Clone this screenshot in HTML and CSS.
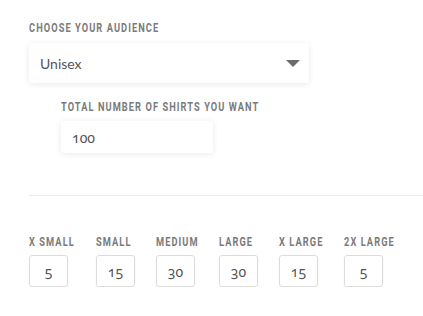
FILE: index.html
```html
<!DOCTYPE html>
<html>
<head>
<meta charset="utf-8">
<link rel="stylesheet" href="styles.css">
</head>
<body>
<div class="page">
  <div class="audience">
    <div class="label"><span>Choose your audience</span></div>
    <div class="select">
      <span class="select-value">Unisex</span>
      <svg class="caret" width="14" height="7" viewBox="0 0 14 7"><path d="M0 0H14L7 7Z" fill="#6b6b6b"/></svg>
    </div>
  </div>
  <div class="total">
    <div class="label"><span>Total number of shirts you want</span></div>
    <div class="text-input num">100</div>
  </div>
  <div class="divider"></div>
  <div class="sizes">
    <div class="size"><div class="label"><span>X Small</span></div><div class="size-box num">5</div></div>
    <div class="size"><div class="label"><span>Small</span></div><div class="size-box num">15</div></div>
    <div class="size"><div class="label"><span>Medium</span></div><div class="size-box num">30</div></div>
    <div class="size"><div class="label"><span>Large</span></div><div class="size-box num">30</div></div>
    <div class="size"><div class="label"><span>X Large</span></div><div class="size-box num">15</div></div>
    <div class="size"><div class="label"><span>2X Large</span></div><div class="size-box num">5</div></div>
  </div>
</div>
</body>
</html>
```
FILE: styles.css
```css
html, body {
  margin: 0;
  padding: 0;
  background: #fff;
}
.page {
  padding: 21px 0 0 29px;
  font-family: Lato, "Open Sans", sans-serif;
  color: #555;
}
.label {
  font-family: Roboto, "Liberation Sans", sans-serif;
  font-weight: bold;
  font-size: 12.5px;
  line-height: 14px;
  letter-spacing: 1.45px;
  text-transform: uppercase;
  color: #7b7b7b;
  white-space: nowrap;
}
.label span {
  display: inline-block;
  transform: scaleX(0.74);
  transform-origin: 0 50%;
}
.audience .label {
  margin-bottom: 8px;
}
.select {
  width: 280px;
  height: 40px;
  box-sizing: border-box;
  padding: 0 9px 0 11px;
  display: flex;
  align-items: center;
  justify-content: space-between;
  background: #fff;
  border-radius: 3px;
  box-shadow: 0 1px 6px rgba(0, 0, 0, 0.09);
}
.select-value {
  font-size: 14px;
  color: #555;
}
.num {
  font-family: "Noto Sans", "Open Sans", sans-serif;
  font-variant-numeric: oldstyle-nums;
  font-feature-settings: "onum" 1;
  color: #555;
}
.total {
  margin: 17px 0 0 32px;
}
.total .label {
  margin-bottom: 7px;
}
.text-input {
  width: 152px;
  height: 32px;
  box-sizing: border-box;
  padding: 0 11px;
  display: flex;
  align-items: center;
  font-size: 14px;
  background: #fff;
  border-radius: 3px;
  box-shadow: 0 1px 6px rgba(0, 0, 0, 0.09);
}
.divider {
  height: 1px;
  background: #ececec;
  margin-top: 42px;
}
.sizes {
  display: grid;
  grid-template-columns: 46px 39px 42px 39px 44px 50px;
  column-gap: 21px;
  margin-top: 39px;
}
.size .label {
  margin-bottom: 6px;
}
.size-box {
  width: 39px;
  height: 32px;
  box-sizing: border-box;
  border: 1px solid #dcdcdc;
  border-radius: 3px;
  display: flex;
  align-items: center;
  justify-content: center;
  font-size: 14px;
  box-shadow: 0 1px 3px rgba(0, 0, 0, 0.05);
}
```
